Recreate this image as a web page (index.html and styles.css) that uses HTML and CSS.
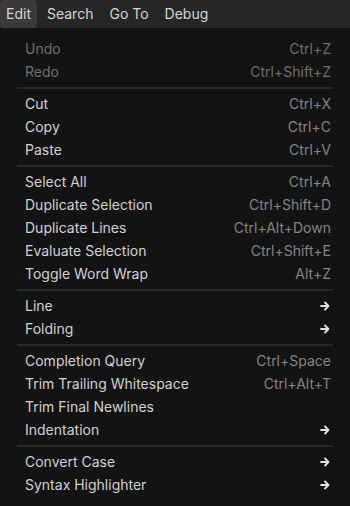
FILE: index.html
```html
<!DOCTYPE html>
<html>
<head>
<meta charset="utf-8">
<link rel="stylesheet" href="styles.css">
</head>
<body>
<div class="menubar">
  <div class="mb-item active">Edit</div>
  <div class="mb-item">Search</div>
  <div class="mb-item">Go To</div>
  <div class="mb-item">Debug</div>
</div>
<div class="menu">
  <div class="row disabled"><span>Undo</span><span class="key">Ctrl+Z</span></div>
  <div class="row disabled"><span>Redo</span><span class="key">Ctrl+Shift+Z</span></div>
  <div class="sep"></div>
  <div class="row"><span>Cut</span><span class="key">Ctrl+X</span></div>
  <div class="row"><span>Copy</span><span class="key">Ctrl+C</span></div>
  <div class="row"><span>Paste</span><span class="key">Ctrl+V</span></div>
  <div class="sep"></div>
  <div class="row"><span>Select All</span><span class="key">Ctrl+A</span></div>
  <div class="row"><span>Duplicate Selection</span><span class="key">Ctrl+Shift+D</span></div>
  <div class="row"><span>Duplicate Lines</span><span class="key">Ctrl+Alt+Down</span></div>
  <div class="row"><span>Evaluate Selection</span><span class="key">Ctrl+Shift+E</span></div>
  <div class="row"><span>Toggle Word Wrap</span><span class="key">Alt+Z</span></div>
  <div class="sep"></div>
  <div class="row"><span>Line</span><svg class="arrow" viewBox="0 0 10 10"><path d="M1 5H8.5M5 1.5L8.5 5L5 8.5"/></svg></div>
  <div class="row"><span>Folding</span><svg class="arrow" viewBox="0 0 10 10"><path d="M1 5H8.5M5 1.5L8.5 5L5 8.5"/></svg></div>
  <div class="sep"></div>
  <div class="row"><span>Completion Query</span><span class="key">Ctrl+Space</span></div>
  <div class="row"><span>Trim Trailing Whitespace</span><span class="key">Ctrl+Alt+T</span></div>
  <div class="row"><span>Trim Final Newlines</span></div>
  <div class="row"><span>Indentation</span><svg class="arrow" viewBox="0 0 10 10"><path d="M1 5H8.5M5 1.5L8.5 5L5 8.5"/></svg></div>
  <div class="sep"></div>
  <div class="row"><span>Convert Case</span><svg class="arrow" viewBox="0 0 10 10"><path d="M1 5H8.5M5 1.5L8.5 5L5 8.5"/></svg></div>
  <div class="row"><span>Syntax Highlighter</span><svg class="arrow" viewBox="0 0 10 10"><path d="M1 5H8.5M5 1.5L8.5 5L5 8.5"/></svg></div>
</div>
</body>
</html>
```
FILE: styles.css
```css
html, body {
  margin: 0;
  padding: 0;
  background: #131313;
  font-family: Inter, "Noto Sans", sans-serif;
  font-size: 14px;
  color: #d2d2d2;
  height: 100%;
}
.menubar {
  display: flex;
  gap: 4px;
  height: 28px;
  background: #262626;
}
.mb-item {
  padding: 0 6px;
  line-height: 28px;
  color: #d6d6d6;
  border-radius: 4px;
}
.mb-item.active {
  background: #3a3a3a;
}
.menu {
  padding-top: 9px;
}
.row {
  display: flex;
  justify-content: space-between;
  align-items: center;
  height: 23px;
  padding: 0 19px 0 25px;
}
.row.disabled {
  color: #6f6f6f;
}
.key {
  color: #858585;
}
.row.disabled .key {
  color: #6f6f6f;
}
.sep {
  height: 2px;
  background: #282828;
  margin: 4px 17px 3px;
}
.arrow {
  width: 10px;
  height: 10px;
  margin-right: 1px;
  fill: none;
  stroke: #e4e4e4;
  stroke-width: 1.8;
  stroke-linecap: round;
  stroke-linejoin: round;
}
```
